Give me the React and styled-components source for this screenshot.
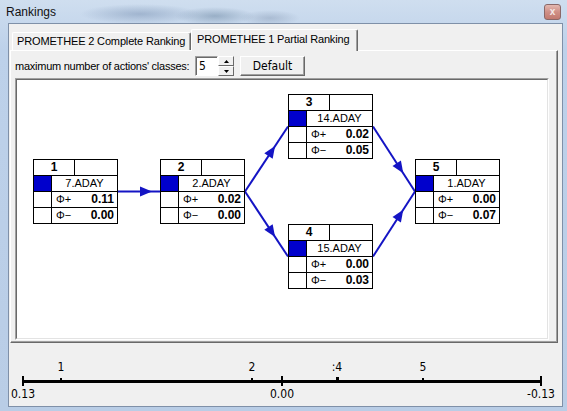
import React from 'react';
import styled, { createGlobalStyle } from 'styled-components';

const GlobalStyle = createGlobalStyle`
  html, body {
    margin: 0;
    padding: 0;
    background: #fff;
  }
  body {
    font-family: "Liberation Sans", Arial, sans-serif;
    color: #000;
  }
`;

const NARROW = `"Liberation Sans Narrow", "DejaVu Sans Condensed", "Liberation Sans", sans-serif`;

const NODE_W = 85;
const NODE_H = 65;

const nodes = [
  { id: 1, name: '7.ADAY', plus: '0.11', minus: '0.00', x: 16, y: 79 },
  { id: 2, name: '2.ADAY', plus: '0.02', minus: '0.00', x: 143, y: 79 },
  { id: 3, name: '14.ADAY', plus: '0.02', minus: '0.05', x: 271, y: 14 },
  { id: 4, name: '15.ADAY', plus: '0.00', minus: '0.03', x: 271, y: 144 },
  { id: 5, name: '1.ADAY', plus: '0.00', minus: '0.07', x: 398, y: 79 },
];

const edges = [[1, 2, 0.81], [2, 3, 0.7], [2, 4, 0.7], [3, 5, 0.72], [4, 5, 0.72]];

// axis marks, x in axis-svg coordinates
const marks = [
  { label: '1', x: 51 },
  { label: '2', x: 242 },
  { label: ':4', x: 327, dot: true },
  { label: '5', x: 413 },
];

const Window = styled.div`
  width: 567px;
  height: 411px;
  box-sizing: border-box;
  display: flex;
  flex-direction: column;
  overflow: hidden;
  background:
    radial-gradient(ellipse 60px 10px at 140px 14px, rgba(110, 135, 170, 0.45), transparent),
    radial-gradient(ellipse 40px 9px at 215px 16px, rgba(80, 110, 140, 0.4), transparent),
    radial-gradient(ellipse 30px 8px at 270px 18px, rgba(100, 120, 150, 0.3), transparent),
    linear-gradient(180deg, #cfdeef 0%, #bdd1ea 12%, #b9cde6 100%);
`;

const TitleBar = styled.div`
  height: 23px;
  flex: none;
  display: flex;
  align-items: center;
  justify-content: space-between;
  padding: 0 6px 0 6px;
  box-sizing: border-box;
`;

const Title = styled.span`
  font-size: 12px;
  color: #111;
`;

const CloseButton = styled.div`
  width: 17px;
  height: 16px;
  box-sizing: border-box;
  border: 1px solid #8a6868;
  border-radius: 3px;
  background: linear-gradient(180deg, #e4b8b0 0%, #cf8f86 50%, #c27a70 100%);
  color: #f4e8e8;
  font-size: 10px;
  font-weight: bold;
  line-height: 13px;
  text-align: center;
`;

const Frame = styled.div`
  flex: 1;
  display: flex;
  padding: 0 4px 4px 8px;
  min-height: 0;
`;

const Client = styled.div`
  flex: 1;
  display: flex;
  flex-direction: column;
  background: #f0f0f0;
  border: 1px solid #7f90a8;
  padding: 5px 4px 0 1px;
  min-width: 0;
`;

const TabStrip = styled.div`
  height: 21px;
  flex: none;
  display: flex;
  align-items: flex-end;
  padding-left: 2px;
  position: relative;
  z-index: 1;
`;

const Tab = styled.div`
  box-sizing: border-box;
  width: ${p => p.width}px;
  height: ${p => (p.active ? 22 : 18)}px;
  margin-bottom: ${p => (p.active ? -1 : 0)}px;
  padding: ${p => (p.active ? '3px 0 0 5px' : '2px 0 0 4px')};
  background: #f0f0f0;
  border-top: 1px solid #fff;
  border-left: 1px solid #fff;
  border-right: 1px solid #696969;
  box-shadow: inset -1px 0 0 #a0a0a0;
  border-radius: 2px 2px 0 0;
  font-size: 11px;
  letter-spacing: -0.15px;
  white-space: nowrap;
  overflow: hidden;
`;

const Panel = styled.div`
  height: 293px;
  flex: none;
  box-sizing: border-box;
  border-style: solid;
  border-width: 1px;
  border-color: #fff #696969 #696969 #fff;
  box-shadow: inset -1px -1px 0 #a0a0a0;
  padding: 5px 0 0 4px;
  display: flex;
  flex-direction: column;
`;

const ControlRow = styled.div`
  height: 20px;
  display: flex;
  align-items: center;
`;

const Label = styled.span`
  width: 180px;
  font-size: 11px;
  letter-spacing: -0.25px;
  white-space: nowrap;
`;

const NumberInput = styled.div`
  width: 23px;
  height: 20px;
  box-sizing: border-box;
  background: #fff;
  border-style: solid;
  border-width: 1px;
  border-color: #a0a0a0 #fff #fff #a0a0a0;
  box-shadow: inset 1px 1px 0 #696969;
  font-family: ${NARROW};
  font-size: 12px;
  padding: 2px 0 0 3px;
`;

const Spinner = styled.div`
  width: 16px;
  height: 20px;
  display: flex;
  flex-direction: column;
`;

const SpinHalf = styled.div`
  flex: 1;
  box-sizing: border-box;
  border-style: solid;
  border-width: 1px;
  border-color: #fff #696969 #696969 #fff;
  background: #f0f0f0;
  display: flex;
  align-items: center;
  justify-content: center;
`;

const Button = styled.div`
  margin-left: 6px;
  width: 65px;
  height: 20px;
  box-sizing: border-box;
  border-style: solid;
  border-width: 1px;
  border-color: #fff #696969 #696969 #fff;
  box-shadow: inset -1px -1px 0 #a0a0a0;
  background: #f0f0f0;
  font-family: ${NARROW};
  font-size: 12px;
  display: flex;
  align-items: center;
  justify-content: center;
`;

const CanvasFrame = styled.div`
  margin-top: 2px;
  width: 534px;
  height: 262px;
  box-sizing: border-box;
  border-style: solid;
  border-width: 1px;
  border-color: #a0a0a0 #fff #fff #a0a0a0;
  display: flex;
`;

const Surface = styled.div`
  flex: 1;
  position: relative;
  background: #fff;
  border-style: solid;
  border-width: 1px;
  border-color: #696969 #e3e3e3 #e3e3e3 #696969;
`;

const Wires = styled.svg`
  position: absolute;
  left: 0;
  top: 0;
  width: 100%;
  height: 100%;
`;

const NodeBox = styled.div`
  position: absolute;
  left: ${p => p.x}px;
  top: ${p => p.y}px;
  width: ${NODE_W}px;
  height: ${NODE_H}px;
  box-sizing: border-box;
  border: 1px solid #000;
  background: #fff;
  display: flex;
  flex-direction: column;
`;

const NodeRow = styled.div`
  height: 15px;
  display: flex;
  & + & {
    border-top: 1px solid #000;
  }
`;

const HeadNum = styled.div`
  width: 40px;
  border-right: 1px solid #000;
  text-align: center;
  font-weight: bold;
  font-size: 12px;
  line-height: 15px;
`;

const Swatch = styled.div`
  width: 17px;
  border-right: 1px solid #000;
  background: ${p => (p.filled ? '#0000cc' : 'transparent')};
`;

const NameCell = styled.div`
  flex: 1;
  text-align: center;
  font-size: 11px;
  line-height: 15px;
`;

const FlowCell = styled.div`
  flex: 1;
  display: flex;
  justify-content: space-between;
  padding: 0 3px 0 4px;
  font-size: 11px;
  line-height: 15px;
`;

const FlowValue = styled.span`
  font-weight: bold;
  font-size: 12px;
`;

const AxisArea = styled.svg`
  flex: 1;
  width: 100%;
  display: block;
`;

const Node = ({ node }) => (
  <NodeBox x={node.x} y={node.y}>
    <NodeRow>
      <HeadNum>{node.id}</HeadNum>
    </NodeRow>
    <NodeRow>
      <Swatch filled />
      <NameCell>{node.name}</NameCell>
    </NodeRow>
    <NodeRow>
      <Swatch />
      <FlowCell>
        <span>Φ+</span>
        <FlowValue>{node.plus}</FlowValue>
      </FlowCell>
    </NodeRow>
    <NodeRow>
      <Swatch />
      <FlowCell>
        <span>Φ−</span>
        <FlowValue>{node.minus}</FlowValue>
      </FlowCell>
    </NodeRow>
  </NodeBox>
);

const Arrow = ({ from, to, t }) => {
  const x1 = from.x + NODE_W;
  const y1 = from.y + NODE_H / 2;
  const x2 = to.x;
  const y2 = to.y + NODE_H / 2;
  const len = Math.hypot(x2 - x1, y2 - y1);
  const dx = (x2 - x1) / len;
  const dy = (y2 - y1) / len;
  const tx = x1 + (x2 - x1) * t;
  const ty = y1 + (y2 - y1) * t;
  const bx = tx - dx * 12;
  const by = ty - dy * 12;
  const pts = [
    [tx, ty],
    [bx - dy * 5, by + dx * 5],
    [bx + dy * 5, by - dx * 5],
  ].map(p => p.join(',')).join(' ');
  return (
    <g>
      <line x1={x1} y1={y1} x2={x2} y2={y2} stroke="#1414c4" strokeWidth="2" />
      <polygon points={pts} fill="#1414c4" />
    </g>
  );
};

const byId = id => nodes.find(n => n.id === id);

export default function App() {
  return (
    <>
      <GlobalStyle />
      <Window>
        <TitleBar>
          <Title>Rankings</Title>
          <CloseButton>x</CloseButton>
        </TitleBar>
        <Frame>
          <Client>
            <TabStrip>
              <Tab width={179}>PROMETHEE 2 Complete Ranking</Tab>
              <Tab width={167} active>PROMETHEE 1 Partial Ranking</Tab>
            </TabStrip>
            <Panel>
              <ControlRow>
                <Label>maximum number of actions' classes:</Label>
                <NumberInput>5</NumberInput>
                <Spinner>
                  <SpinHalf>
                    <svg width="5" height="3"><polygon points="0,3 5,3 2.5,0" fill="#000" /></svg>
                  </SpinHalf>
                  <SpinHalf>
                    <svg width="5" height="3"><polygon points="0,0 5,0 2.5,3" fill="#000" /></svg>
                  </SpinHalf>
                </Spinner>
                <Button>Default</Button>
              </ControlRow>
              <CanvasFrame>
                <Surface>
                  <Wires>
                    {edges.map(([a, b, t]) => (
                      <Arrow key={`${a}-${b}`} from={byId(a)} to={byId(b)} t={t} />
                    ))}
                  </Wires>
                  {nodes.map(n => <Node key={n.id} node={n} />)}
                </Surface>
              </CanvasFrame>
            </Panel>
            <AxisArea>
              <g fontFamily={NARROW} fontSize="12" fill="#000">
                <rect x="13" y="37" width="519" height="3" fill="#000" />
                {[13, 272, 531].map(x => (
                  <rect key={x} x={x - 1} y="33" width="2" height="10" fill="#000" />
                ))}
                {marks.map(m => (
                  <g key={m.label}>
                    <rect x={m.x - 1} y={m.dot ? 34 : 35} width={m.dot ? 3 : 2} height="3" fill="#000" />
                    <text x={m.x} y="28" textAnchor="middle">{m.label}</text>
                  </g>
                ))}
                <text x="13" y="55" textAnchor="middle">0.13</text>
                <text x="272" y="55" textAnchor="middle">0.00</text>
                <text x="531" y="55" textAnchor="middle">-0.13</text>
              </g>
            </AxisArea>
          </Client>
        </Frame>
      </Window>
    </>
  );
}
